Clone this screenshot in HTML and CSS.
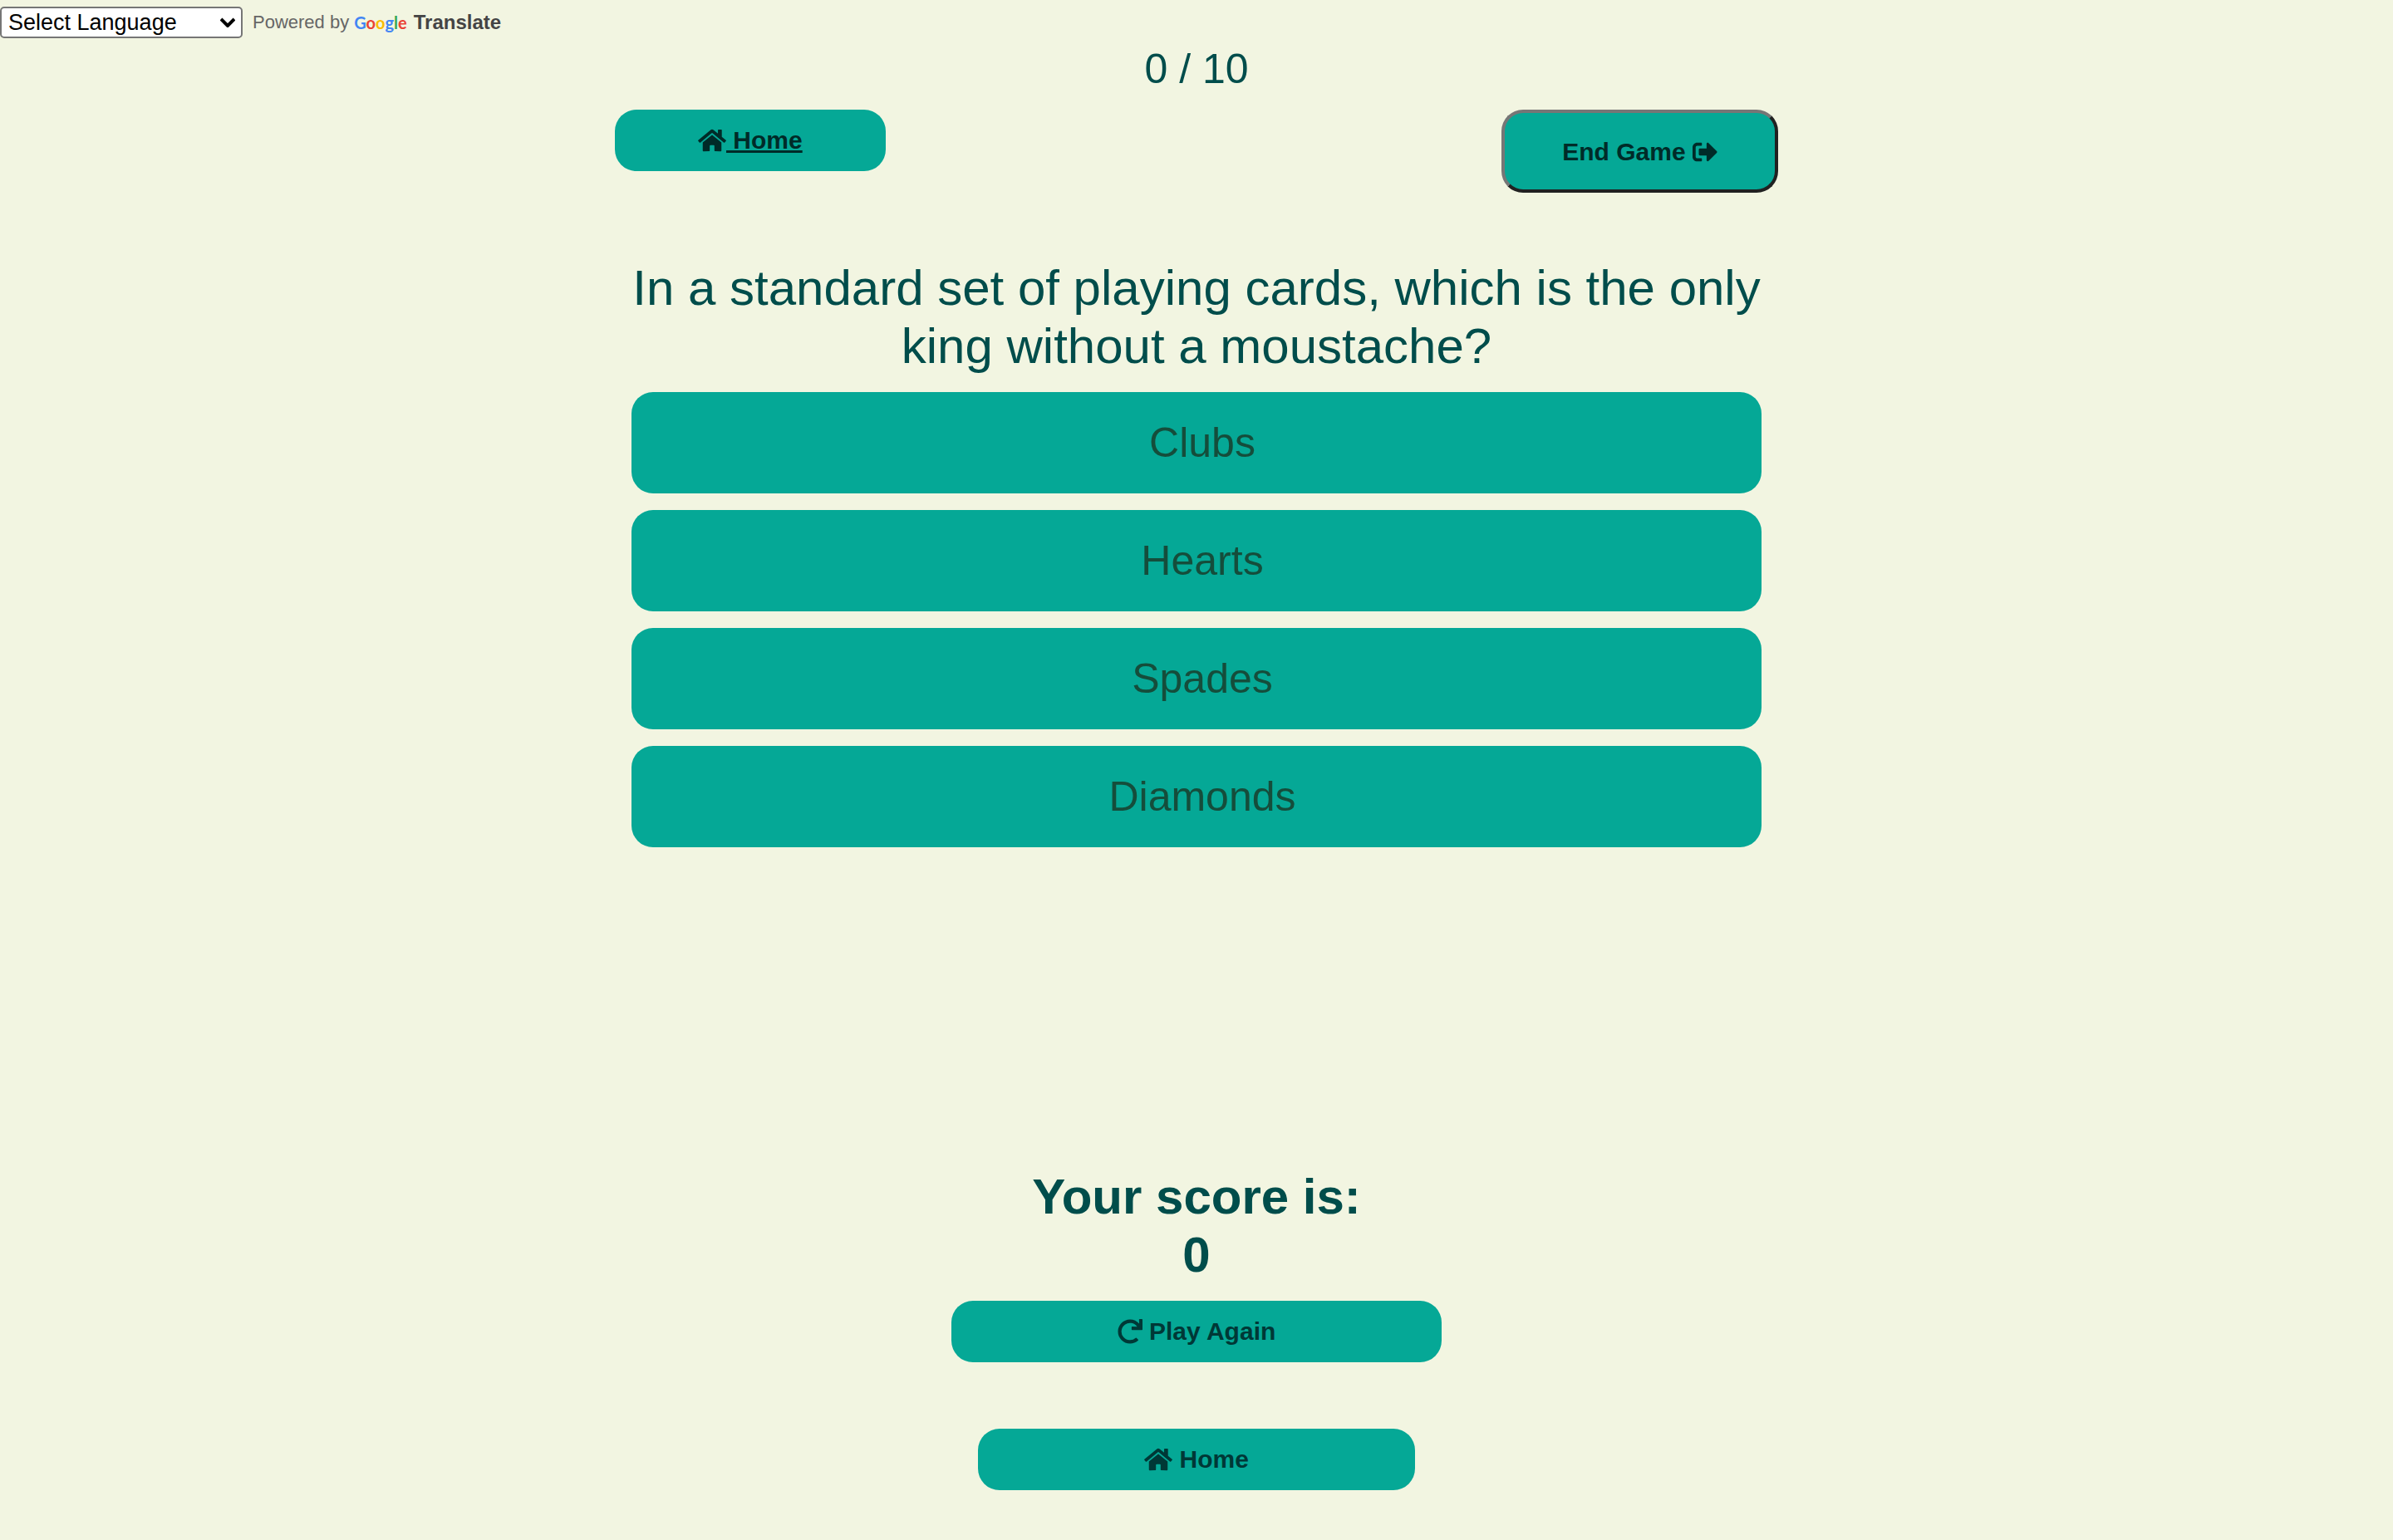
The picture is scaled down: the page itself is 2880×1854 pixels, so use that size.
FILE: index.html
```html
<!DOCTYPE html>
<html lang="en">
<head>
  <meta charset="utf-8">
  <meta name="viewport" content="width=device-width, initial-scale=1">
  <title>Quiz</title>
  <link rel="stylesheet" href="styles.css">
</head>
<body>
  <svg class="sprite" aria-hidden="true">
    <symbol id="icon-home" viewBox="0 0 576 512"><path d="M280.37 148.26L96 300.11V464a16 16 0 0 0 16 16l112.06-.29a16 16 0 0 0 15.92-16V368a16 16 0 0 1 16-16h64a16 16 0 0 1 16 16v95.64a16 16 0 0 0 16 16.05L464 480a16 16 0 0 0 16-16V300L295.67 148.26a12.19 12.19 0 0 0-15.3 0zM571.6 251.47L488 182.56V44.05a12 12 0 0 0-12-12h-56a12 12 0 0 0-12 12v72.61L318.47 43a48 48 0 0 0-61 0L4.34 251.47a12 12 0 0 0-1.6 16.9l25.5 31A12 12 0 0 0 45.15 301l235.22-193.74a12.19 12.19 0 0 1 15.3 0L530.9 301a12 12 0 0 0 16.9-1.6l25.5-31a12 12 0 0 0-1.7-16.93z"/></symbol>
    <symbol id="icon-exit" viewBox="0 0 512 512"><path d="M497 273L329 441c-15 15-41 4.500-41-17v-96H152c-13.300 0-24-10.700-24-24v-96c0-13.300 10.700-24 24-24h136V88c0-21.400 25.900-32 41-17l168 168c9.300 9.400 9.300 24.600 0 34zM192 436v-40c0-6.600-5.400-12-12-12H96c-17.700 0-32-14.300-32-32V160c0-17.700 14.300-32 32-32h84c6.600 0 12-5.400 12-12V76c0-6.600-5.400-12-12-12H96c-53 0-96 43-96 96v192c0 53 43 96 96 96h84c6.600 0 12-5.400 12-12z"/></symbol>
    <symbol id="icon-redo" viewBox="0 0 512 512"><path d="M500.33 0h-47.41a12 12 0 0 0-12 12.57l4 82.76A247.42 247.42 0 0 0 256 8C119.34 8 7.9 119.53 8 256.19 8.1 393.07 119.1 504 256 504a247.1 247.1 0 0 0 166.18-63.91 12 12 0 0 0 .48-17.43l-34-34a12 12 0 0 0-16.38-.55A176 176 0 1 1 402.1 157.8l-101.53-4.87a12 12 0 0 0-12.57 12v47.41a12 12 0 0 0 12 12h200.33a12 12 0 0 0 12-12V12a12 12 0 0 0-12-12z"/></symbol>
  </svg>

  <div class="translate">
    <div class="picker">
      <select class="picker-select" aria-label="Select Language">
        <option>Select Language</option>
      </select>
      <svg class="picker-arrow" viewBox="0 0 18 12" aria-hidden="true"><path d="M1 2l8 8 8-8"/></svg>
    </div>
    <span class="powered">Powered by</span>
    <a class="google" href="#"><span class="logo"><span class="blue">G</span><span class="red">o</span><span class="yellow">o</span><span class="blue">g</span><span class="green">l</span><span class="red">e</span></span><span class="product">Translate</span></a>
  </div>

  <main class="quiz">
    <p class="counter">0 / 10</p>
    <nav class="controls">
      <a class="btn btn-link" href="#"><svg class="icon icon-wide"><use href="#icon-home"/></svg><span class="underlined">&nbsp;Home</span></a>
      <button class="btn btn-end" type="button">End Game&nbsp;<svg class="icon"><use href="#icon-exit"/></svg></button>
    </nav>

    <section class="question">
      <h1 class="question-text">In a standard set of playing cards, which is the only king without a moustache?</h1>
      <div class="answers">
        <button class="answer" type="button">Clubs</button>
        <button class="answer" type="button">Hearts</button>
        <button class="answer" type="button">Spades</button>
        <button class="answer" type="button">Diamonds</button>
      </div>
    </section>

    <section class="result">
      <h2 class="score">Your score is:<br>0</h2>
      <button class="btn btn-wide" type="button"><svg class="icon"><use href="#icon-redo"/></svg>&nbsp;Play Again</button>
      <a class="btn btn-wide" href="#"><svg class="icon icon-wide"><use href="#icon-home"/></svg>&nbsp;Home</a>
    </section>
  </main>
</body>
</html>
```
FILE: styles.css
```css
* {
  box-sizing: border-box;
}

body {
  margin: 0;
  background: #f2f5e1;
  color: #004d4b;
  font-family: "Liberation Sans", Helvetica, Arial, sans-serif;
}

.sprite {
  display: none;
}

/* Language picker bar */
.translate {
  display: flex;
  align-items: center;
  height: 54px;
}

.picker {
  position: relative;
  margin-right: 12px;
}

.picker-select {
  display: block;
  appearance: none;
  width: 292px;
  height: 38px;
  padding: 0 8px;
  border: 2px solid #767676;
  border-radius: 5px;
  background: #fff;
  color: #000;
  font: 27px/34px "Liberation Sans", Arial, sans-serif;
}

.picker-arrow {
  position: absolute;
  top: 13px;
  right: 9px;
  width: 18px;
  height: 12px;
  fill: none;
  stroke: #000;
  stroke-width: 4;
  pointer-events: none;
}

.powered {
  margin-right: 6px;
  color: #666;
  font-size: 22px;
}

.google {
  display: flex;
  align-items: baseline;
  gap: 8px;
  color: #444;
  text-decoration: none;
}

.logo {
  font-family: Lato, sans-serif;
  font-size: 20px;
  font-weight: 700;
  line-height: 28px;
}

.product {
  font-size: 24px;
  font-weight: 700;
}

.blue { color: #4285f4; }
.red { color: #ea4335; }
.yellow { color: #fbbc05; }
.green { color: #34a853; }

/* Quiz column */
.quiz {
  max-width: 1400px;
  margin: 0 auto;
  padding-bottom: 60px;
}

.counter {
  margin: 0 0 20px;
  font-size: 50px;
  line-height: 58px;
  text-align: center;
}

.controls {
  display: flex;
  justify-content: space-between;
  align-items: flex-start;
}

.btn {
  display: inline-flex;
  justify-content: center;
  align-items: center;
  padding: 20px 100px;
  border: 0;
  border-radius: 26px;
  background: #05a896;
  color: #003836;
  font-family: inherit;
  font-size: 30px;
  font-weight: 700;
  line-height: 34px;
  text-decoration: none;
  cursor: pointer;
}

.btn-link,
.btn-end {
  color: #002b28;
}

.btn-end {
  padding: 30px 69px 28px;
  border: 4px solid;
  border-color: #767676 #212121 #212121 #767676;
}

.btn-wide {
  padding: 20px 200px;
}

.underlined {
  text-decoration: underline;
}

.icon {
  width: 30px;
  height: 30px;
  fill: currentColor;
}

.icon-wide {
  width: 34px;
}

.question {
  padding: 80px 20px 0;
}

.question-text,
.score {
  margin: 0 0 20px;
  font-size: 60px;
  line-height: 70px;
  text-align: center;
}

.question-text {
  font-weight: 400;
}

.answers {
  display: flex;
  flex-direction: column;
  gap: 20px;
}

.answer {
  padding: 32px 20px 32px 34px;
  border: 0;
  border-radius: 26px;
  background: #05a896;
  color: #154d3b;
  font: 50px/58px "Liberation Sans", Arial, sans-serif;
  text-align: center;
  cursor: pointer;
}

.result {
  display: flex;
  flex-direction: column;
  align-items: center;
  gap: 80px;
  margin-top: 386px;
}

.score {
  margin-bottom: -60px;
}
```
